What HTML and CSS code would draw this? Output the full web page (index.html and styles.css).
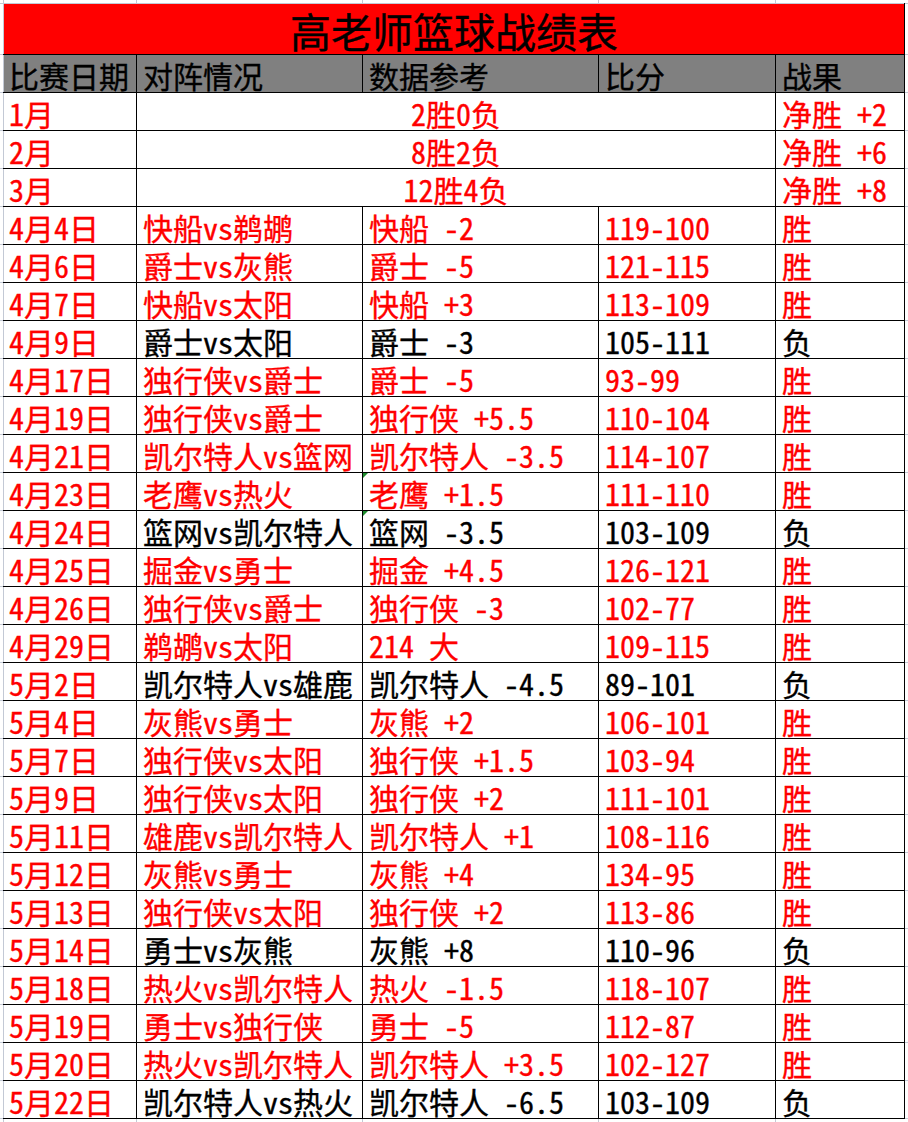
FILE: index.html
```html
<!DOCTYPE html>
<html lang="zh-CN">
<head>
<meta charset="utf-8">
<title>高老师篮球战绩表</title>
<link rel="stylesheet" href="styles.css">
</head>
<body>
<table class="sheet">
  <colgroup>
    <col class="c-date"><col class="c-match"><col class="c-data"><col class="c-score"><col class="c-res">
  </colgroup>
  <tr class="title-row"><td colspan="5" class="title">高老师篮球战绩表</td></tr>
  <tr class="head-row"><td class="first">比赛日期</td><td>对阵情况</td><td>数据参考</td><td>比分</td><td>战果</td></tr>
  <tr class="red"><td class="first">1月</td><td colspan="3" class="mid">2胜0负</td><td>净胜 +2</td></tr>
  <tr class="red"><td class="first">2月</td><td colspan="3" class="mid">8胜2负</td><td>净胜 +6</td></tr>
  <tr class="red"><td class="first">3月</td><td colspan="3" class="mid">12胜4负</td><td>净胜 +8</td></tr>
  <tr class="red"><td class="first">4月4日</td><td>快船vs鹈鹕</td><td>快船 -2</td><td>119-100</td><td>胜</td></tr>
  <tr class="red"><td class="first">4月6日</td><td>爵士vs灰熊</td><td>爵士 -5</td><td>121-115</td><td>胜</td></tr>
  <tr class="red"><td class="first">4月7日</td><td>快船vs太阳</td><td>快船 +3</td><td>113-109</td><td>胜</td></tr>
  <tr class="black"><td class="first">4月9日</td><td>爵士vs太阳</td><td>爵士 -3</td><td>105-111</td><td>负</td></tr>
  <tr class="red"><td class="first">4月17日</td><td>独行侠vs爵士</td><td>爵士 -5</td><td>93-99</td><td>胜</td></tr>
  <tr class="red"><td class="first">4月19日</td><td>独行侠vs爵士</td><td>独行侠 +5.5</td><td>110-104</td><td>胜</td></tr>
  <tr class="red"><td class="first">4月21日</td><td>凯尔特人vs篮网</td><td>凯尔特人 -3.5</td><td>114-107</td><td>胜</td></tr>
  <tr class="red"><td class="first">4月23日</td><td>老鹰vs热火</td><td class="flag">老鹰 +1.5</td><td>111-110</td><td>胜</td></tr>
  <tr class="black"><td class="first">4月24日</td><td>篮网vs凯尔特人</td><td class="flag">篮网 -3.5</td><td>103-109</td><td>负</td></tr>
  <tr class="red"><td class="first">4月25日</td><td>掘金vs勇士</td><td>掘金 +4.5</td><td>126-121</td><td>胜</td></tr>
  <tr class="red"><td class="first">4月26日</td><td>独行侠vs爵士</td><td>独行侠 -3</td><td>102-77</td><td>胜</td></tr>
  <tr class="red"><td class="first">4月29日</td><td>鹈鹕vs太阳</td><td>214 大</td><td>109-115</td><td>胜</td></tr>
  <tr class="black"><td class="first">5月2日</td><td>凯尔特人vs雄鹿</td><td>凯尔特人 -4.5</td><td>89-101</td><td>负</td></tr>
  <tr class="red"><td class="first">5月4日</td><td>灰熊vs勇士</td><td>灰熊 +2</td><td>106-101</td><td>胜</td></tr>
  <tr class="red"><td class="first">5月7日</td><td>独行侠vs太阳</td><td>独行侠 +1.5</td><td>103-94</td><td>胜</td></tr>
  <tr class="red"><td class="first">5月9日</td><td>独行侠vs太阳</td><td>独行侠 +2</td><td>111-101</td><td>胜</td></tr>
  <tr class="red"><td class="first">5月11日</td><td>雄鹿vs凯尔特人</td><td>凯尔特人 +1</td><td>108-116</td><td>胜</td></tr>
  <tr class="red"><td class="first">5月12日</td><td>灰熊vs勇士</td><td>灰熊 +4</td><td>134-95</td><td>胜</td></tr>
  <tr class="red"><td class="first">5月13日</td><td>独行侠vs太阳</td><td>独行侠 +2</td><td>113-86</td><td>胜</td></tr>
  <tr class="black"><td class="first">5月14日</td><td>勇士vs灰熊</td><td>灰熊 +8</td><td>110-96</td><td>负</td></tr>
  <tr class="red"><td class="first">5月18日</td><td>热火vs凯尔特人</td><td>热火 -1.5</td><td>118-107</td><td>胜</td></tr>
  <tr class="red"><td class="first">5月19日</td><td>勇士vs独行侠</td><td>勇士 -5</td><td>112-87</td><td>胜</td></tr>
  <tr class="red"><td class="first">5月20日</td><td>热火vs凯尔特人</td><td>凯尔特人 +3.5</td><td>102-127</td><td>胜</td></tr>
  <tr class="black"><td class="first">5月22日</td><td>凯尔特人vs热火</td><td>凯尔特人 -6.5</td><td>103-109</td><td>负</td></tr>
</table>
</body>
</html>
```
FILE: styles.css
```css
html, body {
  margin: 0;
  padding: 0;
}
body {
  width: 908px;
  height: 1122px;
  overflow: hidden;
  background-color: #fff;
  background-image:
    linear-gradient(#c3c9d5, #c3c9d5),
    linear-gradient(#c3c9d5, #c3c9d5),
    linear-gradient(#c3c9d5, #c3c9d5),
    linear-gradient(#c3c9d5, #c3c9d5),
    linear-gradient(#c3c9d5, #c3c9d5),
    linear-gradient(#c3c9d5, #c3c9d5),
    repeating-linear-gradient(to bottom, #c3c9d5 0 1px, transparent 1px 38px);
  background-position:
    3px 0, 0 3px, 136px 0, 362px 0, 598px 0, 775px 0, 0 54px;
  background-size:
    1px 100%, 100% 1px, 1px 100%, 1px 100%, 1px 100%, 1px 100%, 100% 1068px;
  background-repeat: no-repeat;
  font-family: "Noto Sans Mono CJK SC", "Noto Sans CJK SC", "DejaVu Sans", sans-serif;
}
.sheet {
  margin: 3px 0 0 3px;
  border-collapse: collapse;
  table-layout: fixed;
  width: 901px;
}
.c-date { width: 133px; }
.c-match { width: 226px; }
.c-data { width: 236px; }
.c-score { width: 177px; }
.c-res { width: 129px; }

.sheet tr {
  height: 38px;
}
.sheet td {
  box-sizing: border-box;
  border: 1px solid #000;
  background: #fff;
  padding: 3px 0 0 6px;
  font-size: 30px;
  line-height: 33px;
  white-space: nowrap;
  vertical-align: middle;
  color: #ff0000;
  -webkit-text-stroke: 0.35px currentColor;
}
.sheet td.first {
  border-left-color: #c3c9d5;
  padding-left: 5px;
}
.sheet tr.title-row {
  height: 51px;
}
.title-row td.title {
  padding: 1px 0 0 0;
  background: #ff0000;
  color: #000;
  font-size: 41px;
  line-height: 48px;
  text-align: center;
  border-top-color: #c3c9d5;
  border-left-color: #c3c9d5;
}
.head-row td {
  background: #808080;
  color: #000;
}
.red td { color: #ff0000; }
.black td { color: #000; }
.black td.first { color: #ff0000; }
.sheet td.mid {
  text-align: center;
  padding-left: 0;
}
.sheet td.flag {
  position: relative;
}
.sheet td.flag::before {
  content: "";
  position: absolute;
  left: 0;
  top: 0;
  border-top: 5px solid #1e8c2e;
  border-right: 5px solid transparent;
}
```
